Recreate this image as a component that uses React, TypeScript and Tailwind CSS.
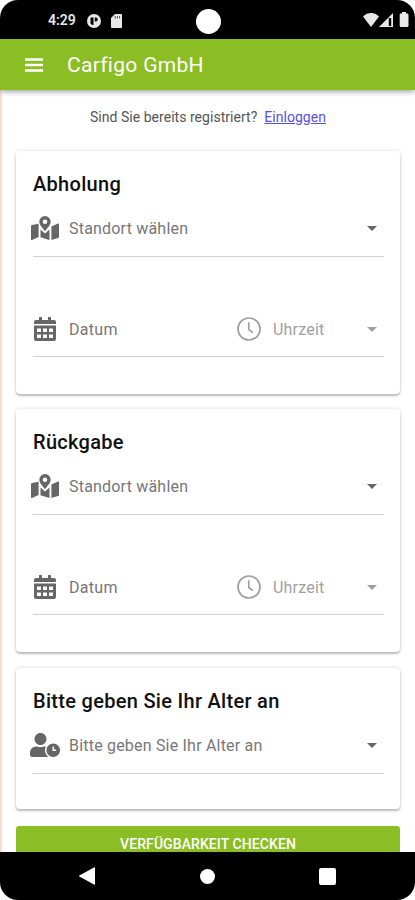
import React from 'react';
import { FaUserClock } from 'react-icons/fa';

const Caret = () => (
    <svg viewBox="0 0 10 5" className="mt-px h-[5px] w-[10px] shrink-0" fill="currentColor">
        <path d="M0 0h10L5 5z" />
    </svg>
);

const MapIcon = () => (
    <svg viewBox="0 0 28 24" className="ml-px h-6 w-7 shrink-0" fill="currentColor">
        <path
            fillRule="evenodd"
            d="M14 0a5.700 5.700 0 0 1 5.700 5.700C19.700 8.800 16.500 12 14 15C11.500 12 8.300 8.800 8.300 5.700A5.700 5.700 0 0 1 14 0zM14 3.400a2.300 2.300 0 1 0 0 4.600a2.300 2.300 0 0 0 0-4.600z"
        />
        <path d="M0 10.300a1.500 1.500 0 0 1 1-1.400L7.600 7.800V21L1 23.900a.7.7 0 0 1-1-.6z" />
        <path d="M9.500 13.500L14 17.500L18.500 13.500V24L9.500 21.200z" />
        <path d="M20.400 10.500L27 7.600a.7.7 0 0 1 1 .6v12.500a1.500 1.500 0 0 1-1 1.400L20.400 24z" />
    </svg>
);

const ClockIcon = () => (
    <svg viewBox="0 0 24 24" className="h-6 w-6 shrink-0" fill="none" stroke="currentColor" strokeWidth="1.7">
        <circle cx="12" cy="12" r="11" />
        <path d="M11.8 5.2v7.3l4.2 3.1" />
    </svg>
);

const CalendarIcon = () => (
    <svg viewBox="0 0 22 24" className="ml-[1px] h-6 w-[22px] shrink-0" fill="currentColor">
        <path d="M5 1a1 1 0 0 1 3 0v2h6V1a1 1 0 0 1 3 0v2h3a2 2 0 0 1 2 2v2H0V5a2 2 0 0 1 2-2h3z" />
        <path
            fillRule="evenodd"
            d="M0 8.500h22V22a2 2 0 0 1-2 2H2a2 2 0 0 1-2-2zM3 11.500v3.500h4v-3.500zM9 11.500v3.500h4v-3.500zM15 11.500v3.500h4v-3.500zM3 17.500V21h4v-3.500zM9 17.500V21h4v-3.500zM15 17.500V21h4v-3.500z"
        />
    </svg>
);

const StatusBar = () => (
    <div className="relative flex h-[39px] shrink-0 items-center justify-between bg-black pr-[6px] pl-[48px] text-[#e8e8e8]">
        <div className="flex items-center pt-[2px]">
            <span className="w-[39px] text-[14px] font-semibold">4:29</span>
            <svg viewBox="0 0 14 14" className="h-[14px] w-[14px]">
                <circle cx="7" cy="7" r="7" fill="currentColor" />
                <path d="M3.500 3.500h3v7.500H5.200L3.500 9.500zM7.800 3.500h1a2 2 0 0 1 0 4h-1z" fill="#000" />
            </svg>
            <svg viewBox="0 0 11 14" className="ml-[10px] h-[14px] w-[11px]">
                <path d="M4 0h6a1 1 0 0 1 1 1v12a1 1 0 0 1-1 1H1a1 1 0 0 1-1-1V4z" fill="currentColor" />
                <path d="M4.200 2v2.500M6.400 2v2.500M8.600 2v2.500" stroke="#555" strokeWidth="1" />
            </svg>
        </div>
        <div className="absolute top-[9px] left-[195.500px] h-[25px] w-[25px] rounded-full bg-white" />
        <div className="flex items-center">
            <svg viewBox="0 0 16 14" className="h-[14px] w-4" fill="currentColor">
                <path d="M0 3.500C4.700-1.100 11.300-1.100 16 3.500L8 14z" />
            </svg>
            <svg viewBox="0 0 14 14" className="h-[14px] w-[14px]">
                <path d="M14 0v14H0z" fill="currentColor" />
                <path d="M9.800 5h2.400v8H9.800z" fill="#000" />
            </svg>
            <svg viewBox="0 0 10 15" className="ml-[6px] h-[15px] w-[10px]" fill="currentColor">
                <path d="M3 0h4v1.500h1.500A1.200 1.200 0 0 1 9.500 2.700v11a1.200 1.200 0 0 1-1.200 1.200H1.900a1.200 1.200 0 0 1-1.200-1.200v-11A1.200 1.200 0 0 1 1.900 1.500H3z" />
            </svg>
        </div>
    </div>
);

const AppBar = () => (
    <header className="z-10 flex h-[51px] shrink-0 items-center bg-[#8bbd25] pl-6 text-white shadow-[0_2px_5px_rgba(0,0,0,0.35)]">
        <svg viewBox="0 0 20 14" className="h-[14px] w-5" fill="none" stroke="currentColor" strokeWidth="2.400">
            <path d="M1 1.500h18M1 7h18M1 12.500h18" />
        </svg>
        <h1 className="ml-[23px] pt-[2px] text-[21px] tracking-[0.300px]">Carfigo GmbH</h1>
    </header>
);

interface CardProps {
    title: string;
    className: string;
    children: React.ReactNode;
}

const Card: React.FC<CardProps> = ({ title, className, children }) => (
    <section className={`shrink-0 rounded-[4px] bg-white pt-[17px] pr-4 pl-[17px] shadow-[0_2px_2px_rgba(0,0,0,0.22),0_0_4px_rgba(0,0,0,0.14)] ${className}`}>
        <h2 className="h-8 text-[20px] leading-8 font-medium tracking-[0.300px] whitespace-nowrap text-[#111]">{title}</h2>
        {children}
    </section>
);

interface SelectRowProps {
    icon: React.ReactNode;
    label: string;
}

const SelectRow: React.FC<SelectRowProps> = ({ icon, label }) => (
    <div className="flex h-[57px] items-center border-b border-[#d2d2d2] pr-[7px] text-[#666]">
        <div className="-ml-[3px] flex w-[39px] shrink-0">{icon}</div>
        <span className="flex-1 pt-[2px] text-[16px] tracking-[0.200px] text-[#777]">{label}</span>
        <Caret />
    </div>
);

const DateRow = () => (
    <div className="mt-[43px] flex h-[57px] items-center border-b border-[#d2d2d2] pt-[2px] pr-[7px] text-[#666]">
        <CalendarIcon />
        <span className="ml-[13px] w-[168px] pt-px text-[16px] tracking-[0.300px] text-[#777]">Datum</span>
        <div className="flex flex-1 items-center text-[#a0a0a0]">
            <ClockIcon />
            <span className="ml-3 flex-1 pt-px text-[16px] tracking-[0.200px]">Uhrzeit</span>
            <Caret />
        </div>
    </div>
);

const BookingCard = ({ title, className }: { title: string; className: string }) => (
    <Card title={title} className={className}>
        <SelectRow icon={<MapIcon />} label="Standort wählen" />
        <DateRow />
    </Card>
);

const NavBar = () => (
    <nav className="flex h-[48px] shrink-0 items-center bg-black pl-[79px] text-white">
        <svg viewBox="0 0 16 18" className="h-[18px] w-4" fill="currentColor">
            <path d="M15 .5a.7.7 0 0 1 1 .6v15.800a.7.7 0 0 1-1 .6L.4 9.600a.7.7 0 0 1 0-1.200z" />
        </svg>
        <div className="ml-[105px] h-[15px] w-[15px] rounded-full bg-white" />
        <div className="ml-[104px] h-[17px] w-[17px] rounded-[2px] bg-white" />
    </nav>
);

const App: React.FC = () => {
    return (
        <div className="h-[900px] w-[415px] bg-white font-[Roboto,sans-serif]">
            <div className="flex h-full flex-col overflow-hidden rounded-[18px] bg-white">
                <StatusBar />
                <AppBar />
                <main className="flex min-h-0 flex-1 flex-col overflow-hidden border-l-2 border-[#fbdccd] pr-[15px] pl-[14px]">
                    <p className="h-[61px] shrink-0 pt-[17px] text-center text-[14px] leading-5 tracking-[0.030px] text-[#555]">
                        Sind Sie bereits registriert?
                        <a href="#" className="ml-[7px] text-[#5551e8] underline">Einloggen</a>
                    </p>
                    <BookingCard title="Abholung" className="h-[243px]" />
                    <BookingCard title="Rückgabe" className="mt-[15px] h-[243px]" />
                    <Card title="Bitte geben Sie Ihr Alter an" className="mt-4 h-[141px]">
                        <SelectRow icon={<FaUserClock className="h-6 w-[30px]" />} label="Bitte geben Sie Ihr Alter an" />
                    </Card>
                    <button className="mt-[17px] h-[36px] shrink-0 rounded-[3px] bg-[#8bbd25] text-[14px] font-medium tracking-[0.080px] text-white">
                        VERFÜGBARKEIT CHECKEN
                    </button>
                </main>
                <NavBar />
            </div>
        </div>
    );
};

export default App;
